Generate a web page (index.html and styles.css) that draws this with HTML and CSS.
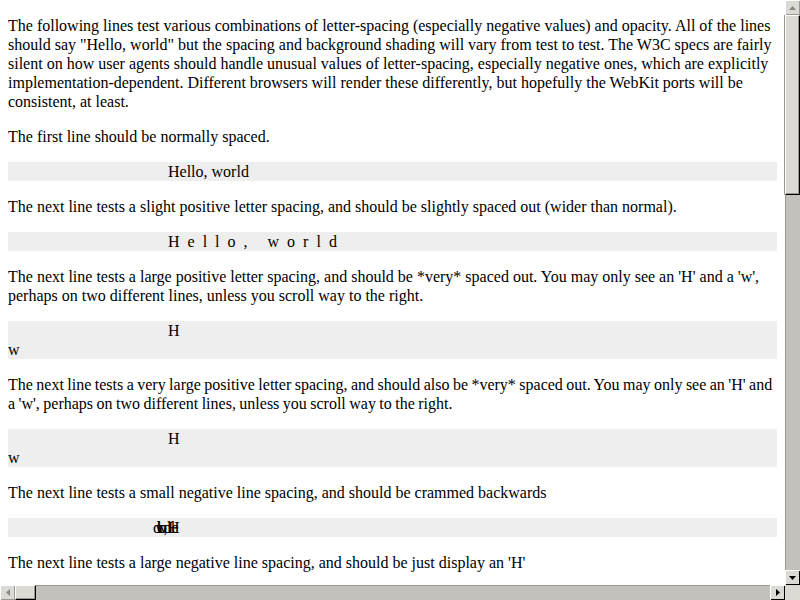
FILE: index.html
```html
<!DOCTYPE html>
<html>
<head>
<meta charset="utf-8">
<link rel="stylesheet" href="styles.css">
</head>
<body>
<div class="page">
<p>The following lines test various combinations of letter-spacing (especially negative values) and opacity. All of the lines should say "Hello, world" but the spacing and background shading will vary from test to test. The W3C specs are fairly silent on how user agents should handle unusual values of letter-spacing, especially negative ones, which are explicitly implementation-dependent. Different browsers will render these differently, but hopefully the WebKit ports will be consistent, at least.</p>

<p>The first line should be normally spaced.</p>
<div class="test">Hello, world</div>

<p>The next line tests a slight positive letter spacing, and should be slightly spaced out (wider than normal).</p>
<div class="test small-pos">Hello, world</div>

<p>The next line tests a large positive letter spacing, and should be *very* spaced out. You may only see an 'H' and a 'w', perhaps on two different lines, unless you scroll way to the right.</p>
<div class="test large-pos">Hello, world</div>

<p class="tight">The next line tests a very large positive letter spacing, and should also be *very* spaced out. You may only see an 'H' and a 'w', perhaps on two different lines, unless you scroll way to the right.</p>
<div class="test huge-pos">Hello, world</div>

<p>The next line tests a small negative line spacing, and should be crammed backwards</p>
<div class="test small-neg">Hello, world</div>

<p>The next line tests a large negative line spacing, and should be just display an 'H'</p>
<div class="test large-neg">Hello, world</div>

<p>The next line tests a very large negative line spacing, and should be just display an 'H'</p>
<div class="test huge-neg">Hello, world</div>
</div>

<div class="vscroll">
  <div class="btn btn-up"><svg width="7" height="4" viewBox="0 0 7 4"><path d="M0 4 L3.5 0 L7 4 Z" fill="#8a8883"/></svg></div>
  <div class="vthumb"></div>
  <div class="track"></div>
  <div class="btn btn-down"><svg width="7" height="4" viewBox="0 0 7 4"><path d="M0 0 L7 0 L3.5 4 Z" fill="#000"/></svg></div>
</div>
<div class="hscroll">
  <div class="btn btn-left"><svg width="4" height="7" viewBox="0 0 4 7"><path d="M4 0 L4 7 L0 3.5 Z" fill="#8a8883"/></svg></div>
  <div class="hthumb"></div>
  <div class="track"></div>
  <div class="btn btn-right"><svg width="4" height="7" viewBox="0 0 4 7"><path d="M0 0 L4 3.5 L0 7 Z" fill="#000"/></svg></div>
  <div class="corner"></div>
</div>
</body>
</html>
```
FILE: styles.css
```css
html, body {
  margin: 0;
  padding: 0;
  background: #fff;
  overflow: hidden;
}
body {
  font-family: "Liberation Serif", "Times New Roman", serif;
  font-size: 16px;
  line-height: 19px;
  color: #000;
}
.page {
  width: 769px;
  padding: 0 8px;
  display: flow-root;
}
p {
  margin: 16px -20px 16px 0;
}
p.tight {
  margin-right: -3px;
  word-spacing: -0.55px;
}
.test {
  background: #eee;
  text-indent: 10em;
}
.small-pos { letter-spacing: 0.5em; }
.large-pos { letter-spacing: 100em; }
.huge-pos { letter-spacing: 290em; }
.small-neg { letter-spacing: -0.5em; }
.large-neg { letter-spacing: -100em; }
.huge-neg { letter-spacing: -290em; }

/* painted scrollbars laid over the viewport */
.vscroll {
  position: fixed;
  top: 0;
  right: 0;
  width: 15px;
  height: 585px;
  display: flex;
  flex-direction: column;
  background: #c3c1bb;
  box-shadow: inset 1px 0 #9a9893;
}
.hscroll {
  position: fixed;
  left: 0;
  bottom: 0;
  width: 800px;
  height: 15px;
  display: flex;
  background: #c3c1bb;
  box-shadow: inset 0 1px #9a9893;
}
.track {
  flex: 1;
}
.btn {
  flex: 0 0 15px;
  width: 15px;
  height: 15px;
  box-sizing: border-box;
  background: #dcdad5;
  display: flex;
  align-items: center;
  justify-content: center;
  box-shadow: inset 1px 1px #fff, inset -1px -1px #000;
}
.btn-up, .btn-left {
  box-shadow: inset 1px 1px #fff, inset -1px -1px #9a9893;
}
.vthumb {
  flex: 0 0 180px;
  box-sizing: border-box;
  background: #dcdad5;
  border-top: 1px solid #fff;
  border-left: 1px solid #fff;
  border-right: 1px solid #000;
  border-bottom: 1px solid #000;
  box-shadow: inset -1px -1px #9a9893, -1px 0 #9a9893;
}
.hthumb {
  flex: 0 0 21px;
  box-sizing: border-box;
  background: #dcdad5;
  border-top: 1px solid #fff;
  border-left: 1px solid #fff;
  border-right: 1px solid #000;
  border-bottom: 1px solid #000;
  box-shadow: inset -1px -1px #9a9893;
}
.corner {
  flex: 0 0 15px;
  background: #dcdad5;
}
```
